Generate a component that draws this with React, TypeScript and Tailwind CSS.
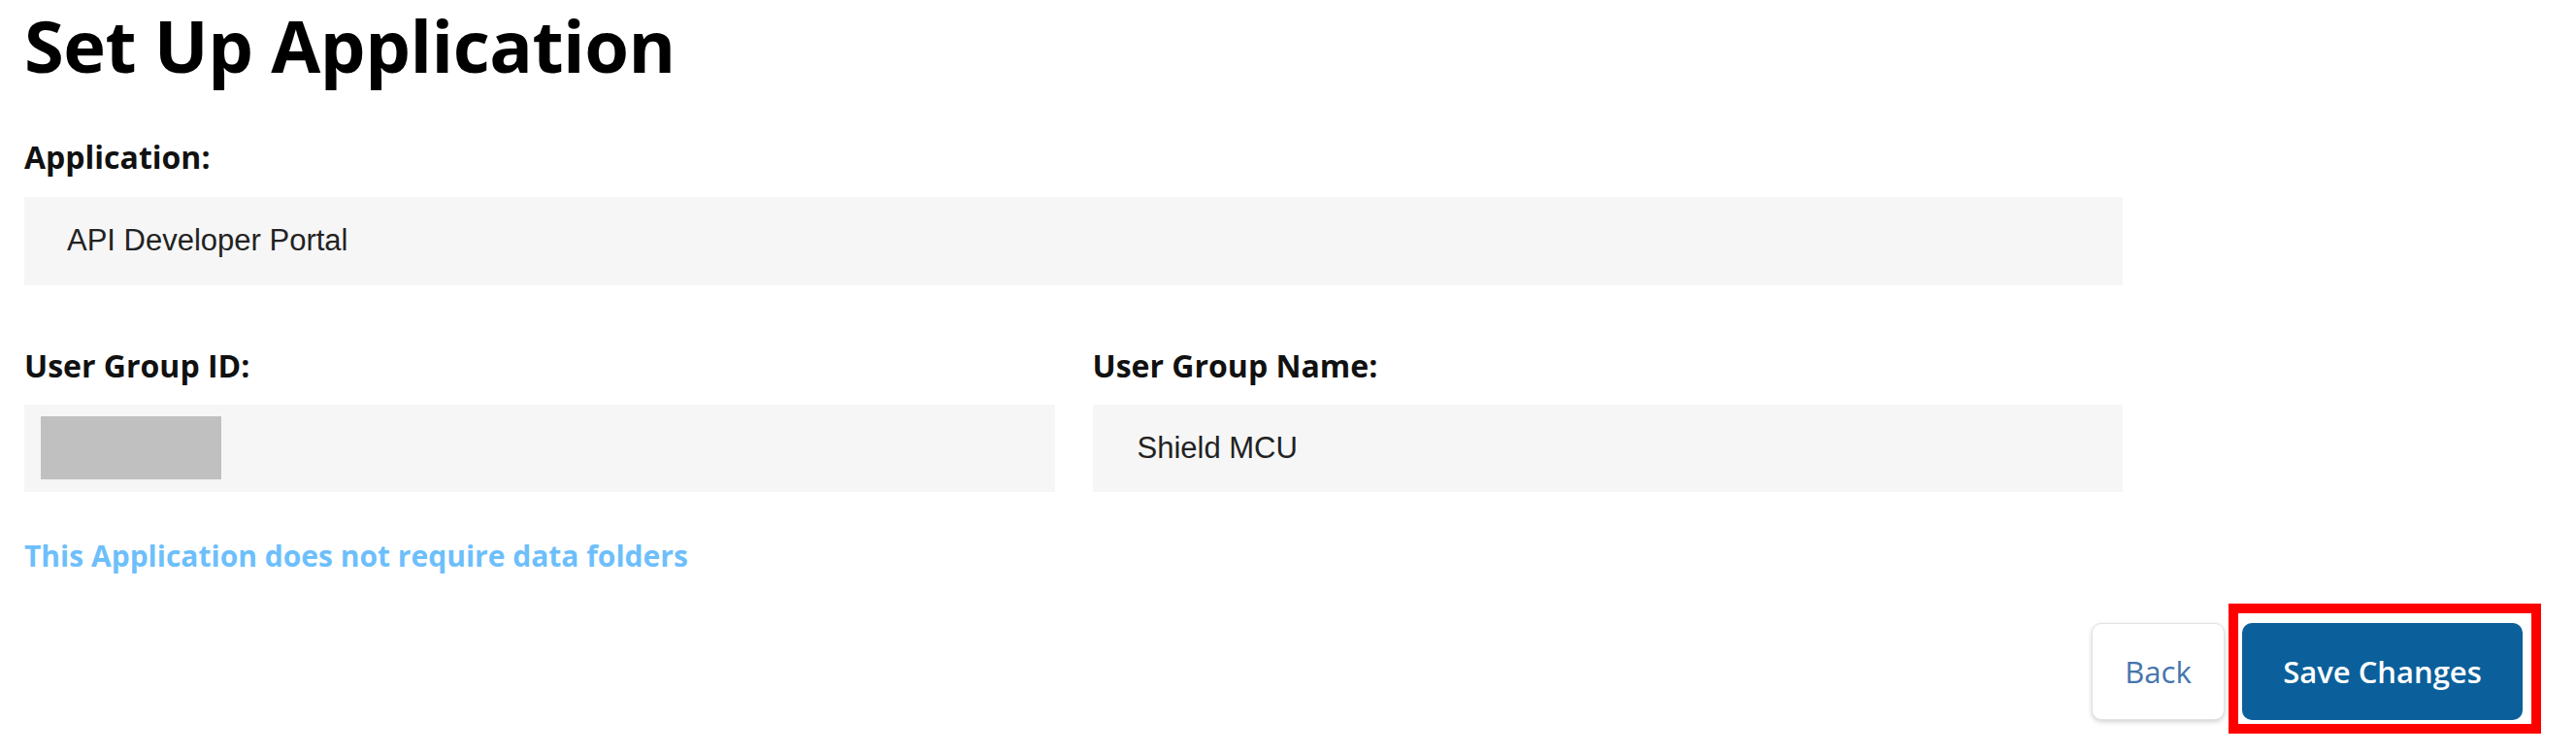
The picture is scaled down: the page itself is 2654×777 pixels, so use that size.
import React from "react";

const sans = { fontFamily: '"Open Sans", "Noto Sans", sans-serif' };
const arial = { fontFamily: '"Liberation Sans", Arial, sans-serif' };

export default function App() {
  return (
    <div className="w-[2654px] h-[777px] bg-white overflow-hidden" style={sans}>
      <div className="pl-[25px] pr-[55px]">
        <h1 className="pt-[3px] text-[74px] leading-[1.2] font-bold text-black tracking-[-0.5px]">
          Set Up Application
        </h1>
        <div className="w-[2162px]">
          <div className="mt-[54px] text-[32px] leading-none font-bold text-[#111]">Application:</div>
          <div className="mt-[25px] h-[91px] bg-[#f6f6f6] flex items-center pl-[44px] text-[31px] text-[#222]" style={arial}>
            API Developer Portal
          </div>
          <div className="mt-[67px] grid grid-cols-2 gap-x-[39px]">
            <div>
              <div className="text-[32px] leading-none font-bold text-[#111]">User Group ID:</div>
              <div className="mt-[24px] h-[90px] bg-[#f6f6f6] pl-[17px] pt-[12px]">
                <div className="w-[186px] h-[65px] bg-[#c0c0c0]" />
              </div>
            </div>
            <div>
              <div className="text-[32px] leading-none font-bold text-[#111]">User Group Name:</div>
              <div className="mt-[24px] h-[90px] bg-[#f6f6f6] flex items-center pl-[46px] text-[31px] text-[#222]" style={arial}>
                Shield MCU
              </div>
            </div>
          </div>
          <div className="mt-[51px] text-[30px] leading-none font-bold text-[#6dbffb]">
            This Application does not require data folders
          </div>
        </div>
        <div className="mt-[54px] flex justify-end gap-[18px]">
          <button className="w-[137px] h-[100px] rounded-[10px] bg-white border border-[#e2e2e2] shadow-[0_2px_5px_rgba(0,0,0,0.18)] text-[31px] font-normal text-[#4575ad]">
            Back
          </button>
          <div className="relative">
            <button className="w-[289px] h-[100px] rounded-[10px] bg-[#0b609b] text-[31px] font-semibold text-white">
              Save Changes
            </button>
            <span className="absolute left-[-14px] top-[-20px] right-[-19px] bottom-[-14px] border-[10px] border-[#ff0000] pointer-events-none" />
          </div>
        </div>
      </div>
    </div>
  );
}
